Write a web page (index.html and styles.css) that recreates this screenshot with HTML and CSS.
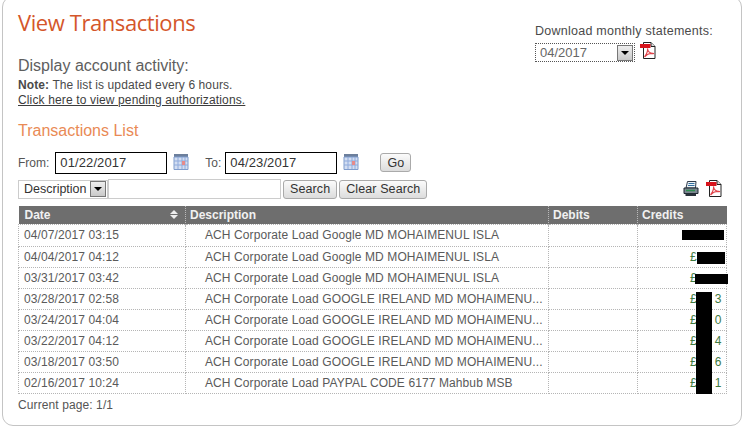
FILE: index.html
```html
<!DOCTYPE html>
<html lang="en">
<head>
<meta charset="utf-8">
<title>View Transactions</title>
<link rel="stylesheet" href="styles.css">
</head>
<body>
<svg class="defs" width="0" height="0" aria-hidden="true">
  <defs>
    <symbol id="pdf" viewBox="0 0 16 17">
      <path d="M3.5 .5H11L15 4.5V16.5H3.5Z" fill="#fff" stroke="#222" stroke-width="1"/>
      <path d="M11 .5V4.5H15" fill="#ddd" stroke="#222" stroke-width="1"/>
      <path d="M0 2H10.5V6H0Z" fill="#d8141c"/>
      <path d="M4.5 15C7 12 8 8 7.5 6.5C7.5 9 10 12 14 11.5C11 11 7 12 4.5 15Z" fill="none" stroke="#e0434a" stroke-width="1.2"/>
    </symbol>
    <symbol id="cal" viewBox="0 0 16 16">
      <path d="M1 0H15V3H1Z" fill="#6c7f9c"/>
      <path d="M1 3H15V15.500H1Z" fill="#d3def2" stroke="#7f9ccc" stroke-width="1"/>
      <path d="M1 7H15M1 11H15M5 3V15M9 3V15M12 3V15" stroke="#8faadb" stroke-width="1" fill="none"/>
      <path d="M9 7H12V11H9Z" fill="#e58a8a"/>
    </symbol>
    <symbol id="printer" viewBox="0 0 16 16">
      <path d="M4.500 .5H13L12.500 7H3Z" fill="#eef2f6" stroke="#2f3b4a" stroke-width="1"/>
      <path d="M5.500 2.500H11.500M5 4.500H11.500" stroke="#2f6f9f" stroke-width="1"/>
      <path d="M1 7H15V12.500H1Z" fill="#7c8791" stroke="#1d2730" stroke-width="1"/>
      <path d="M3 9.500H12" stroke="#2f8f4f" stroke-width="1.500"/>
      <path d="M2.500 12.500H13V15H2.500Z" fill="#2a323a"/>
    </symbol>
  </defs>
</svg>
<main class="card">
  <header class="top">
    <div class="intro">
      <h1 class="title">View Transactions</h1>
      <h2 class="subtitle">Display account activity:</h2>
      <p class="note"><strong>Note:</strong> The list is updated every 6 hours.</p>
      <p class="note"><a class="link" href="#">Click here to view pending authorizations.</a></p>
    </div>
    <div class="statements">
      <div class="statements-label">Download monthly statements:</div>
      <div class="statements-row">
        <div class="month-select">
          <span>04/2017</span>
          <span class="arrow"></span>
        </div>
        <svg class="icon-pdf"><use href="#pdf"/></svg>
      </div>
    </div>
  </header>

  <h3 class="list-title">Transactions List</h3>

  <form class="dates">
    <label class="date-label">From:</label>
    <input class="date-input" type="text" value="01/22/2017">
    <svg class="icon-cal"><use href="#cal"/></svg>
    <label class="date-label to">To:</label>
    <input class="date-input" type="text" value="04/23/2017">
    <svg class="icon-cal"><use href="#cal"/></svg>
    <button class="btn go" type="button">Go</button>
  </form>

  <div class="search">
    <div class="field-select">
      <span>Description</span>
      <span class="arrow"></span>
    </div>
    <input class="search-input" type="text">
    <button class="btn" type="button">Search</button>
    <button class="btn" type="button">Clear Search</button>
    <div class="tools">
      <svg class="icon-print"><use href="#printer"/></svg>
      <svg class="icon-pdf"><use href="#pdf"/></svg>
    </div>
  </div>

  <table class="grid">
    <colgroup>
      <col class="c-date"><col class="c-desc"><col class="c-debit"><col class="c-credit">
    </colgroup>
    <thead>
      <tr>
        <th class="th-date"><div class="sort">Date<span class="sort-icon"></span></div></th>
        <th>Description</th>
        <th>Debits</th>
        <th>Credits</th>
      </tr>
    </thead>
    <tbody>
      <tr class="first"><td>04/07/2017 03:15</td><td class="desc">ACH Corporate Load Google MD MOHAIMENUL ISLA</td><td></td><td class="credit"><span class="mask m1"></span></td></tr>
      <tr><td>04/04/2017 04:12</td><td class="desc">ACH Corporate Load Google MD MOHAIMENUL ISLA</td><td></td><td class="credit">£<span class="mask m2"></span></td></tr>
      <tr><td>03/31/2017 03:42</td><td class="desc">ACH Corporate Load Google MD MOHAIMENUL ISLA</td><td></td><td class="credit">£<span class="mask m3"></span></td></tr>
      <tr><td>03/28/2017 02:58</td><td class="desc">ACH Corporate Load GOOGLE IRELAND MD MOHAIMENU...</td><td></td><td class="credit">£<span class="end">3</span></td></tr>
      <tr><td>03/24/2017 04:04</td><td class="desc">ACH Corporate Load GOOGLE IRELAND MD MOHAIMENU...</td><td></td><td class="credit">£<span class="end">0</span></td></tr>
      <tr><td>03/22/2017 04:12</td><td class="desc">ACH Corporate Load GOOGLE IRELAND MD MOHAIMENU...</td><td></td><td class="credit">£<span class="end">4</span></td></tr>
      <tr><td>03/18/2017 03:50</td><td class="desc">ACH Corporate Load GOOGLE IRELAND MD MOHAIMENU...</td><td></td><td class="credit">£<span class="end">6</span></td></tr>
      <tr><td>02/16/2017 10:24</td><td class="desc">ACH Corporate Load PAYPAL CODE 6177 Mahbub MSB</td><td></td><td class="credit">£<span class="end">1</span></td></tr>
    </tbody>
  </table>
  <span class="bar"></span>
  <div class="pager">Current page: 1/1</div>
</main>
</body>
</html>
```
FILE: styles.css
```css
* { box-sizing: border-box; }
html, body { margin: 0; padding: 0; height: 434px; overflow: hidden; background: #fff; }
body { font-family: "Liberation Sans", Arial, sans-serif; color: #4a4a4a; }
.defs { position: absolute; }

.card {
  position: relative;
  width: 740px;
  height: 430px;
  margin: -4px 0 0 2px;
  padding: 4px 15px 0 15px;
  border: 1.5px solid #c4c4c4;
  border-radius: 11px;
}

.top { display: flex; justify-content: space-between; height: 106px; }
.title {
  margin: 7px 0 0;
  font: 400 22px/28px "Open Sans", sans-serif;
  letter-spacing: -0.42px;
  color: #d4562a;
}
.subtitle {
  margin: 21px 0 0;
  font-weight: 400;
  font-size: 16px;
  line-height: 18px;
  color: #5e5e5e;
}
.note { margin: 2px 0 0; font-size: 12px; line-height: 16px; letter-spacing: 0.1px; color: #4a4a4a; }
.note + .note { margin-top: -1px; letter-spacing: 0.14px; }
.link { color: #3c3c3c; text-decoration: underline; }

.statements { width: 190px; margin-right: 1px; padding-top: 22px; }
.statements-label { font-size: 12.500px; line-height: 16px; letter-spacing: 0.25px; color: #4a4a4a; }
.statements-row { display: flex; align-items: flex-start; gap: 5px; margin-top: 4px; }
.month-select {
  display: flex; align-items: center; justify-content: space-between;
  width: 100px; height: 19px; padding: 0 1px 0 4px;
  border: 1px dotted #555;
  font-size: 13px; color: #666;
}
.arrow {
  position: relative;
  width: 16px; height: 16px;
  background: linear-gradient(#eee, #c9c9c9);
  border: 1px solid #777;
}
.arrow::after {
  content: "";
  position: absolute; left: 3px; top: 5px;
  border: 4px solid transparent;
  border-top: 4px solid #000;
  border-bottom: 0;
}
.icon-pdf { width: 16px; height: 17px; margin-top: -1px; }

.list-title {
  margin: 15px 0 0;
  font-weight: 400;
  font-size: 16px;
  line-height: 18px;
  color: #e98a55;
}

.dates { display: flex; align-items: center; height: 24px; margin-top: 11px; }
.date-label { font-size: 12px; color: #555; }
.date-input {
  width: 112px; height: 22px; margin: 0 6px 0 6px; padding: 0 0 1px 4px;
  border: 1px solid #000; border-radius: 0;
  font: 13px "Liberation Sans", sans-serif; letter-spacing: 0.1px; color: #333;
  background: #fff;
}
.icon-cal { width: 16px; height: 16px; flex: none; margin-top: -3px; }
.to { margin-left: 16px; }
.to + .date-input { margin-left: 4px; }
.btn {
  height: 19px; padding: 0 6px;
  border: 1px solid #aaa; border-radius: 3px;
  background: linear-gradient(#fbfbfb, #dcdcdc);
  font: 12.500px "Liberation Sans", sans-serif; letter-spacing: 0.1px; color: #333;
}
.go { width: 31px; padding: 0; margin-left: 21px; margin-top: -1px; }

.search { display: flex; align-items: center; gap: 2px; height: 20px; margin-top: 4px; }
.field-select {
  display: flex; align-items: center; justify-content: space-between;
  width: 90px; height: 19px; padding: 0 1px 0 5px;
  border: 1px solid #ccc;
  font-size: 12.500px; color: #333;
}
.search-input {
  width: 173px; height: 20px; margin-left: -2px;
  border: 1px solid #ccc; background: #fff;
}
.tools { display: flex; align-items: center; gap: 7px; margin-left: auto; margin-right: 4px; }
.icon-print { width: 16px; height: 16px; }

.grid {
  table-layout: fixed; border-collapse: collapse;
  width: 708px; margin-top: 7px;
  font-size: 12px;
}
.c-date { width: 167px; } .c-desc { width: 363px; } .c-debit { width: 89px; } .c-credit { width: 89px; }
.grid th {
  height: 18px; padding: 0 5px 0 4px;
  background: #6e6e6e; color: #f1f1f1;
  border-right: 1px dotted #bbb;
  font-size: 12px; text-align: left;
}
.grid th:last-child { border-right: 0; }
.grid th.th-date { padding-left: 6px; }
.sort { display: flex; align-items: center; justify-content: space-between; }
.sort-icon { position: relative; width: 8px; height: 9px; margin-right: 2px; }
.sort-icon::before, .sort-icon::after {
  content: ""; position: absolute; left: 0;
  border: 4px solid transparent;
}
.sort-icon::before { top: 0; border-top: 0; border-bottom: 4px solid #eee; }
.sort-icon::after { bottom: 0; border-bottom: 0; border-top: 4px solid #eee; }
.grid td {
  height: 21px; padding: 0 5px;
  border: 1px dotted #b5b5b5;
  color: #5a5a5a; letter-spacing: 0.1px; white-space: nowrap; overflow: hidden;
}
.grid .first td { height: 22px; }
.grid td.desc { padding-left: 19px; }
.grid td.credit {
  position: relative; overflow: visible;
  padding: 0 0 0 52px; text-align: left;
  color: #3f7a3f; letter-spacing: 0;
}
.credit .end { margin-left: 18px; }
.mask { position: absolute; background: #000; }
.m1 { left: 44px; top: 5px; width: 42px; height: 10px; }
.m2 { left: 59px; top: 5px; width: 28px; height: 12px; }
.m3 { left: 57px; top: 6px; width: 33px; height: 10px; }
.bar { position: absolute; left: 693px; top: 295px; width: 16px; height: 102px; background: #000; }
.pager { margin-top: 4px; font-size: 12px; line-height: 14px; letter-spacing: 0.1px; color: #555; }
```
